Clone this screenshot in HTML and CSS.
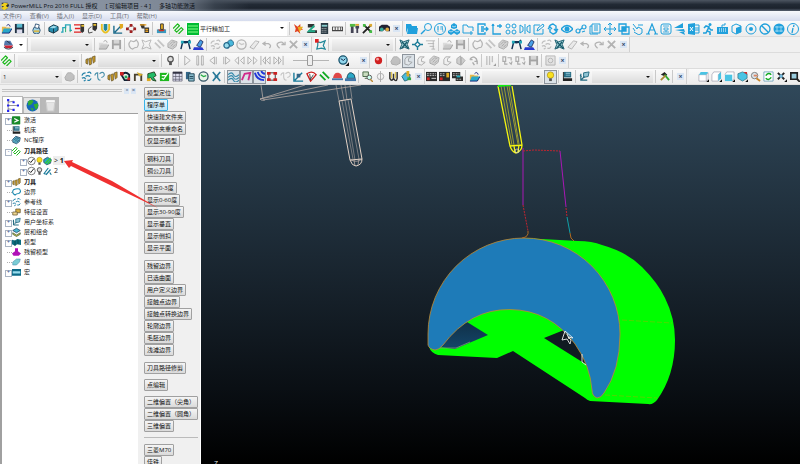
FILE: index.html
```html
<!DOCTYPE html>
<html lang="zh-CN">

<head>
    <meta charset="UTF-8">
    <meta name="viewport" content="width=device-width, initial-scale=1.0">
    <title>PowerMILL Pro 2016</title>
    <link rel="stylesheet" href="styles.css">
</head>

<body>
    <header class="titlebar">
        <span class="app-icon" data-icon="app"></span>
        <h1>PowerMILL Pro 2016 FULL 授权</h1>
        <span>[ 可编辑项目 - 4 ]</span>
        <span>多轴功能激活</span>
    </header>

    <nav class="menu">
        <a href="#">文件(F)</a>
        <a href="#">查看(V)</a>
        <a href="#">插入(I)</a>
        <a href="#">显示(D)</a>
        <a href="#">工具(T)</a>
        <a href="#">帮助(H)</a>
    </nav>

    <!-- Toolbars: the icon names are expanded by script.js -->
    <div class="row">
        <div class="bar">
            <div data-icons="open save | print | block rapid feed tool leads start points list | holder | strategy"></div>
            <div class="combo wide">
                <span data-icon="levels"></span>
                <select aria-label="策略"><option>平行精加工</option></select>
            </div>
            <div data-icons="| star verify calc ruler | drill cross | find x"></div>
        </div>
        <div class="bar blue" data-icons="folder zoom seal cubes newfolder export axis four mirror edit rotate eye chain copy move overlap hand letter frame fan excel run keyboard cube target ban globe info"></div>
    </div>

    <div class="row">
        <div class="bar">
            <button class="drop" aria-label="边界"><span data-icon="boundary"></span></button>
            <div data-icons="|"></div>
            <div class="combo"><select aria-label="边界列表"><option></option></select></div>
            <div data-icons="| ~open ~save | ~loop ~square ~hatch ~part curve pen | ~dots lasso ~clock ~eraser ~undo ~redo ~delete x"></div>
        </div>
        <div class="bar">
            <div data-icons="pattern |"></div>
            <div class="combo"><select aria-label="参考线列表"><option></option></select></div>
            <div data-icons="| mesh diamond ~lines | ~open ~save | ~loop ~hatch ~part curve pen | ~dots mesh ~eraser ~undo ~redo ~delete x"></div>
        </div>
    </div>

    <div class="row">
        <div class="bar">
            <div data-icons="strategy |"></div>
            <div class="combo"><select aria-label="刀具路径"><option></option></select></div>
            <div data-icons="| mills"></div>
            <div class="combo"><select aria-label="刀具"><option></option></select></div>
            <div data-icons="| lamp | ~play ~pause ~stepback ~stepfwd ~rewind ~forward ~first ~last"></div>
            <input type="range" aria-label="仿真速度" min="0" max="100" value="48">
            <div data-icons="speed _ x"></div>
        </div>
        <div class="bar" data-icons="record | ~shade !~half ~half ~part ~half ~split ~spin | ~bars | ~swap ~swap ~save | ~camera x"></div>
    </div>

    <div class="row">
        <div class="bar">
            <div class="combo"><select aria-label="当前刀具路径"><option>1</option></select></div>
            <div data-icons="~shade | dots chain2 mills link arch limit check table pages clock fan2 | !waves !turn !stripes grid ~chain2 axes fanred hatch domered domeblue | search ~phi um wheel x"></div>
        </div>
        <div class="bar flush">
            <div data-icons="nc nc2 nc3 | open"></div>
            <div class="combo"><select aria-label="NC程序"><option></option></select></div>
            <div data-icons="!bulb | layers | planes"></div>
            <div class="combo"><select aria-label="用户坐标系"><option></option></select></div>
            <div data-icons="| hammer | x"></div>
        </div>
        <div class="bar" data-icons="_ viewtop viewside viewfront viewiso lens refresh fit box | sphere"></div>
    </div>

    <main>
        <section class="explorer">
            <div class="grip">
                <i></i>
                <button aria-label="浮动">▫</button>
                <button aria-label="关闭">×</button>
            </div>
            <div class="tabs">
                <button class="active" aria-label="浏览器" data-icon="tree"></button>
                <button aria-label="网络" data-icon="earth"></button>
                <button class="trash" aria-label="回收站" data-icon="bin"></button>
            </div>
            <ul class="tree">
                <li class="more"><span data-icon="active"></span>激活</li>
                <li><span data-icon="layers"></span>机床</li>
                <li><span data-icon="part"></span>NC程序</li>
                <li class="more open"><span data-icon="strategy"></span><b>刀具路径</b>
                    <ul>
                        <li class="more"><span data-icon="tick"></span><span data-icon="bulb"></span><span data-icon="cut"></span><mark>&gt; <b>1</b></mark></li>
                        <li class="more"><span data-icon="tick"></span><span data-icon="lamp"></span><span data-icon="cut2"></span><em>2</em></li>
                    </ul>
                </li>
                <li class="more"><span data-icon="mills"></span><b>刀具</b></li>
                <li><span data-icon="loopblue"></span>边界</li>
                <li class="more"><span data-icon="dots"></span>参考线</li>
                <li><span data-icon="feature"></span>特征设置</li>
                <li class="more"><span data-icon="planes"></span>用户坐标系</li>
                <li class="more"><span data-icon="level"></span>层和组合</li>
                <li class="more"><span data-icon="model"></span>模型</li>
                <li><span data-icon="stock"></span>残留模型</li>
                <li><span data-icon="group"></span>组</li>
                <li class="more"><span data-icon="macro"></span>宏</li>
            </ul>
        </section>

        <aside class="macros">
            <div class="group long">
                <button>模型定位</button>
                <button class="current">程序单</button>
                <button>快速建文件夹</button>
                <button>文件夹重命名</button>
                <button>仅显示模型</button>
            </div>
            <div class="group">
                <button>钢料刀具</button>
                <button>铜公刀具</button>
            </div>
            <div class="group long">
                <button>显示0-3度</button>
                <button>显示0-60度</button>
                <button>显示30-90度</button>
                <button>显示垂直</button>
                <button>显示倒扣</button>
                <button>显示平面</button>
            </div>
            <div class="group long">
                <button>残留边界</button>
                <button>已选曲面</button>
                <button>用户定义边界</button>
                <button>接触点边界</button>
                <button>接触点转换边界</button>
                <button>轮廓边界</button>
                <button>毛胚边界</button>
                <button>浅滩边界</button>
            </div>
            <div class="group">
                <button>刀具路径修剪</button>
            </div>
            <div class="group">
                <button>点编辑</button>
            </div>
            <div class="group">
                <button>二维偏置（尖角）</button>
                <button>二维偏置（圆角）</button>
                <button>三维偏置</button>
            </div>
            <hr>
            <div class="group">
                <button>三菱M70</button>
                <button>佳铁</button>
            </div>
        </aside>

        <section class="view">
            <svg viewBox="201 85 599 379" preserveAspectRatio="xMinYMin slice" fill="none">
                <defs>
                    <linearGradient id="pocket" x1="0" y1="0" x2="0" y2="1">
                        <stop offset="0" stop-color="#103048"/>
                        <stop offset="1" stop-color="#14466a"/>
                    </linearGradient>
                </defs>

                <!-- holder and idle tool -->
                <g stroke="#b5aaa5" stroke-width=".8">
                    <path d="M261 85l2 14M260 99l45-14M260 99l68-14M263 100l98-15M260 99q1 2 5 1"/>
                    <path d="M336 85l3 16M341 85l3 15M345 85l2 15M350 85l2 14" opacity=".8"/>
                    <path d="M342 101l11 58M345 100l10 60M348 100l11 59" opacity=".7"/>
                    <path d="M351 160q6 3 11-1M354 160l1 6M359 159l-1 6"/>
                </g>
                <path d="M339 101l12-2 11 60q0 6-6 7-4 0-6-6zM350 160l12-1" stroke="#e3d2c6"/>

                <!-- cutting tool -->
                <path d="M501 86l11 59M504 86l10 59M507 86l11 58M509 86l10 58" stroke="#9b9b34"/>
                <path d="M498 86l12 60q2 6 6 7 6-2 6-8l-10-59M510 146l12-1M514 146l1 6M519 145l-1 7" stroke="#f5f510" stroke-width="1.3"/>
                <path d="M498 86l13-1" stroke="#12ee12" stroke-width="2"/>
                <circle cx="517" cy="151" r="2" stroke="#ddd" stroke-width=".7"/>

                <!-- part -->
                <path fill="#0f0" d="M523 238L578 241Q592 241 602 245Q627 252 642 267Q658 283 665 298Q675 318 675 340Q675 375 657 400Q653 405 648 404L590 401Q587 400 585 398L513 351L497 358L438 355Q431 353 429 347L460 300z"/>
                <path fill="url(#pocket)" d="M439 347Q451 331 467 322L488 335L455 349z"/>
                <path fill="#101a21" d="M544 338L564 330Q580 345 587 365z"/>
                <path d="M438 348h18l14-6" stroke="#8e9a78" stroke-width=".7"/>
                <path fill="#1e7bb8" stroke="#c08a30" stroke-width=".8" d="M428 345V334A96 96 0 0 1 524 238A96 96 0 0 1 620 334Q620 370 604 393Q601 398 597 398Q592 396 592 390Q590 365 575 344Q550 310 510 309.500Q470 309 443 345Q439 350 435 350Q429 349 428 345z"/>
                <path d="M622 320l50 3M605 395l52 3" stroke="#6ec800" stroke-width=".7" stroke-dasharray="5 2"/>
                <path d="M565 331l-3 9 5-1 3 5 1-4-3-3 5 1zM567 334l2 5M582 354v8l4 3" stroke="#eee" stroke-width=".9"/>

                <!-- lead moves -->
                <path d="M523 148v57M560 151l6 56" stroke="#a818b4"/>
                <path d="M523 151l11-1 26 1M523 205l5 26M566 208l1 9" stroke="#c02430" stroke-dasharray="2 1"/>
                <path d="M567 217l3 16" stroke="#10a0a8"/>
                <path d="M528 231q1 6-6 7M570 233q0 6 4 8" stroke="#b06a20"/>
                <text x="214" y="466" fill="#ddd">Z</text>
            </svg>
        </section>

        <svg class="pointer" viewBox="0 0 96 50" aria-hidden="true">
            <path d="M0 1L9 0L8 2L48 21L94 48L46 25L7 6L5 8z"/>
        </svg>
    </main>

    <script src="script.js"></script>
</body>

</html>
```
FILE: styles.css
```css
* {
    box-sizing: border-box;
}

body {
    margin: 0;
    height: 100vh;
    display: flex;
    flex-direction: column;
    overflow: hidden;
    background-color: #f0f0f0;
    color: #222;
    font-family: "Open Sans", "Noto Sans CJK SC", sans-serif;
    font-size: 6px;
    line-height: 10px;
}

button,
select,
input {
    margin: 0;
    padding: 0;
    font: inherit;
    color: inherit;
}

button {
    border: none;
    background: none;
}

svg {
    display: block;
}

.titlebar {
    flex: none;
    display: flex;
    align-items: center;
    gap: 8px;
    height: 11px;
    background: linear-gradient(to right, rgba(150, 160, 174, 1), rgba(125, 135, 149, 1) 170px, rgba(70, 80, 92, .6) 215px, transparent 250px),
        linear-gradient(#4c5561, #222a35 40%, #1c232d 75%, #566070);
    color: #0c1016;
}

.titlebar h1 {
    margin: 0 0 0 -7px;
    font-size: 6px;
    font-weight: normal;
}

.app-icon svg {
    width: 10px;
    height: 10px;
}

.menu {
    flex: none;
    display: flex;
    gap: 8px;
    height: 10px;
    padding-left: 3px;
    background: linear-gradient(#f6f8fc, #d6dcee);
}

.menu a {
    color: #6b6f78;
    text-decoration: none;
}

/* toolbars */
.row {
    flex: none;
    display: flex;
    gap: 2px;
    height: 16px;
    border-bottom: 1px solid #dcdcdc;
}

.bar {
    display: flex;
    align-items: center;
    height: 15px;
    background: linear-gradient(#fafafa, #ececec);
    border-right: 1px solid #d0d0d0;
}

.bar.flush {
    margin-left: -2px;
}

[data-icons] {
    display: flex;
    align-items: center;
}

.tool {
    display: flex;
    justify-content: center;
    align-items: center;
    width: 13px;
    height: 14px;
}

.tool svg,
.drop svg {
    width: 11px;
    height: 11px;
}

.tool:disabled svg {
    filter: grayscale(1);
    opacity: .4;
}

.tool.pressed {
    border: 1px solid #8d949c;
    background-color: #dbe2e8;
}

.sep {
    width: 1px;
    height: 13px;
    margin: 0 2px 0 1px;
    background-color: #c9c9c9;
}

.space {
    width: 8px;
}

.close {
    width: 7px;
    height: 7px;
    margin: 0 2px;
    background-color: #dae6f4;
    color: #34496b;
    font-size: 7px;
    font-weight: bold;
    line-height: 6px;
}

.blue {
    flex: 1;
    color: #20a0dc;
    border-right: none;
}

.blue .tool {
    flex: 1;
}

.blue .tool svg {
    width: 12px;
    height: 12px;
}

.combo {
    position: relative;
    width: 61px;
    margin: 0 1px;
}

.combo::after,
.drop::after {
    content: "";
    border: 2px solid transparent;
    border-top-color: #111;
    border-bottom: none;
}

.combo::after {
    position: absolute;
    right: 3px;
    top: 5px;
}

.combo select {
    display: block;
    appearance: none;
    width: 100%;
    height: 12px;
    padding-left: 2px;
    border: none;
    background: linear-gradient(#f4f4f4, #dcdcdc);
    line-height: 12px;
}

.combo.wide {
    width: 101px;
}

.combo.wide select {
    height: 14px;
    padding-left: 14px;
    background: #fff;
}

.combo.wide span {
    position: absolute;
    left: 1px;
    top: 1px;
}

.combo.wide svg {
    width: 12px;
    height: 12px;
}

.drop {
    display: flex;
    align-items: center;
    justify-content: space-around;
    width: 26px;
    height: 14px;
    background-color: #fff;
}

input[type="range"] {
    appearance: none;
    width: 36px;
    height: 12px;
    margin: 0 8px;
    background: linear-gradient(#b5b5b5, #b5b5b5) center / 100% 1px no-repeat;
}

input[type="range"]::-webkit-slider-thumb {
    appearance: none;
    width: 6px;
    height: 11px;
    border: 1px solid #999;
    border-radius: 1px;
    background-color: #eee;
}

/* work area */
main {
    position: relative;
    flex: 1;
    min-height: 0;
    display: flex;
}

.explorer {
    flex: none;
    display: flex;
    flex-direction: column;
    width: 138px;
}

.grip {
    display: flex;
    align-items: center;
    gap: 2px;
    height: 11px;
    padding: 0 2px;
}

.grip i {
    flex: 1;
    height: 3px;
    border: solid #c4c4c4;
    border-width: 1px 0;
}

.grip button {
    width: 5px;
    height: 6px;
    background-color: #dae6f4;
    color: #34496b;
    line-height: 5px;
}

.tabs {
    display: flex;
    align-items: flex-end;
    height: 17px;
    padding-left: 2px;
}

.tabs button {
    display: flex;
    justify-content: center;
    align-items: center;
    width: 18px;
    height: 16px;
    border: 1px solid #b8b8b8;
    border-bottom: none;
    background-color: #e4e4e4;
}

.tabs .active {
    width: 21px;
    height: 17px;
    background-color: #fff;
}

.tabs .trash {
    background-color: #b9b9b9;
}

.tabs svg {
    width: 13px;
    height: 13px;
}

.tree {
    flex: 1;
    margin: 0;
    padding: 1px 0 0 5px;
    border-left: 2px solid #a0a0a0;
    border-top: 1px solid #a0a0a0;
    background-color: #fff;
    list-style: none;
}

.tree ul {
    margin: 0;
    padding-left: 10px;
    list-style: none;
}

.tree li {
    position: relative;
    padding-left: 5px;
    white-space: nowrap;
}

.tree li.open {
    margin: 1px 0;
}

.tree li::before {
    content: "";
    position: absolute;
    left: 0;
    top: 5px;
    width: 5px;
    border-top: 1px dotted #b0b0b0;
}

.tree li.more::after {
    content: "+";
    position: absolute;
    left: -2px;
    top: 3px;
    width: 5px;
    height: 5px;
    border: 1px solid #a9b4c4;
    background-color: #fff;
    color: #2c4a86;
    font-size: 5px;
    line-height: 3px;
    text-align: center;
}

.tree li.open::after {
    content: "-";
}

.tree span {
    display: inline-block;
    width: 8px;
    height: 10px;
    margin-right: 4px;
    vertical-align: top;
}

.tree ul span {
    margin-right: 0;
}

.tree span svg {
    width: 9px;
    height: 10px;
}

.tree ul li {
    height: 10px;
}

.tree mark {
    margin-left: 2px;
    padding: 0 1px;
    background-color: #eee;
    color: #111;
    font-size: 7px;
}

.tree em {
    margin-left: 3px;
    font-size: 7px;
    font-style: normal;
}

.macros {
    flex: none;
    width: 63px;
    padding: 2px 2px 0 6px;
    border-right: 1px solid #fff;
    overflow: hidden;
}

.group {
    display: flex;
    flex-direction: column;
    align-items: flex-start;
    margin-bottom: 5px;
}

.group.long {
    padding-bottom: 1px;
}

.group button {
    height: 12px;
    padding: 0 2px;
    border: 1px solid #a0a0a0;
    border-radius: 1px;
    background: linear-gradient(#f5f5f5, #dadada);
    color: #111;
    white-space: nowrap;
}

.group .current {
    border-color: #3cb4e8;
    background: linear-gradient(#eaf7fd, #bfe6f8);
}

.macros hr {
    margin: 0 0 6px;
    border: none;
    border-top: 1px solid #bbb;
}

.view {
    flex: 1;
    min-width: 0;
    background: linear-gradient(#30485a, #1b2833 45%, #0a0f14 80%, #000);
}

.view svg {
    width: 100%;
    height: 100%;
}

.view text {
    font-size: 7px;
}

/* red pointer drawn across the tree and the macro column */
.pointer {
    position: absolute;
    left: 64px;
    top: 75px;
    width: 96px;
    fill: #f03030;
    pointer-events: none;
}
```
FILE: script.js
```js
const icons = {
    app: '<path fill="#2a2f38" d="M2 2h7l2 3-3 5H3z"/><path fill="#f2d21c" d="M1 5l4-3 5 1-3 3 3 2-5 3-4-3 4-1z"/>',
    open: '<path fill="#e8b84a" d="M1 4h4l1 1h4v6H1z"/><path fill="#2aa7c9" d="M3 6h9l-3 5H1z"/><path fill="none" stroke="#127" d="M6 3q3-3 4 1M1 11h8l3-5"/>',
    save: '<path fill="#234" d="M1 1h10v10H1z"/><path fill="#58b8cc" d="M3 1h6v4H3z"/><path fill="#dde" d="M3 7h6v4H3z"/>',
    print: '<circle cx="6" cy="8" r="4" fill="#9fd3e6" stroke="#357"/><path fill="#fff" stroke="#357" d="M4 5l1-4 4 1-1 4z"/><path fill="#d9b84a" d="M3 8h6v2H3z"/>',
    block: '<path fill="#2a8fb0" stroke="#134" d="M1 5l5-3 5 2v4l-5 3-5-2z"/><path fill="#9fdcec" d="M2 5l4-2 4 1-4 2z"/><path stroke="#134" d="M6 6v5"/>',
    rapid: '<path fill="none" stroke="#2aa7b9" stroke-width="1.500" d="M0 10h2V5h3V2h5v6h2"/><path fill="none" stroke="#2a6" d="M5 5v5M10 8v2"/>',
    feed: '<path stroke="#e02020" stroke-width="1.500" d="M0 2h7M1 6h6M0 10h8"/><path fill="#333" d="M7 1h4v8l-2 2-2-2z"/><path fill="#e8c030" d="M8 2h3v2H8z"/>',
    tool: '<path fill="#333" d="M6 0h5v6L9 9 6 7z"/><path fill="#e8c030" d="M7 1h3v2H7z"/><path fill="none" stroke="#444" d="M5 4Q0 6 2 11l4-1"/>',
    leads: '<path fill="none" stroke="#e8c020" stroke-width="2" d="M2 1v6q4 7 8 0V1"/><path fill="#289" d="M4 1h4v6L6 9 4 7z"/>',
    start: '<path fill="none" stroke="#1a6a8a" stroke-width="1.500" d="M1 3v8h9M2 10l8-8"/><path fill="#e0a820" d="M7 1h4v4L8 7z"/>',
    points: '<path fill="none" stroke="#888" d="M2 6l4-4 4 4-4 4z"/><path fill="#a02020" d="M4 1h3v3H4zM8 5h3v3H8zM4 8h3v3H4zM0 5h3v3H0z"/>',
    list: '<path fill="#333" d="M1 1h5v5H3zM6 5h5v6H6z"/><path stroke="#e8a020" stroke-width="1.500" d="M1 2h7M7 7h3M7 9h3"/>',
    holder: '<path fill="#3a9ac0" d="M1 7h10v4H1z"/><path fill="#d03020" d="M2 7h8L8 9H4z"/><path fill="#e8b020" stroke="#333" d="M5 1h3v6H5z"/>',
    strategy: '<path fill="none" stroke="#18b818" stroke-width="1.300" stroke-linejoin="round" d="M0 6l5-5 2 2-5 5 2 2 5-5 2 2-5 5"/>',
    levels: '<path fill="#0b3" d="M0 0h12v12H0z"/><path stroke="#8f8" d="M1 3h10M1 6h10M1 9h10"/>',
    star: '<path fill="#e04020" d="M1 1l4 3 3-3v4l3 2-4 1 1 4-3-3-3 1 1-4z"/><path fill="#e8b020" d="M5 4h6l-4 6z"/>',
    verify: '<path fill="#333" d="M2 1h7v4H2zM3 8h9v3H1z"/><path fill="none" stroke="#2a8" stroke-width="2" d="M9 3L3 9h7"/>',
    calc: '<path fill="#2a3a44" d="M2 0h8v12H2z"/><path fill="#8cc" d="M3 2h6v2H3z"/><path stroke="#ccc" stroke-dasharray="1 1" d="M3 6h6M3 8h6M3 10h6"/>',
    ruler: '<path fill="#444" d="M0 4h12v5H0z"/><path stroke="#eee" stroke-width="3" stroke-dasharray="2 1" d="M1 6h10"/>',
    drill: '<path fill="#445" d="M2 2h3v9H2zM7 3h4v3H7zM8 6h2v5H8z"/><path fill="#5b4" d="M1 1h6v3H1z"/><path fill="#da3" d="M7 1h4v2H7z"/>',
    cross: '<path stroke="#222" stroke-width="2" d="M1 11l9-9M2 2l8 8"/><path fill="#4b4" d="M1 1h3v3H1zM8 8h3v3H8z"/><path fill="#da3" d="M8 1h3v3H8z"/>',
    find: '<path fill="#223" d="M0 4l3-2h6l3 2v5H8L6 7 4 9H0z"/><circle cx="3" cy="7" r="2" fill="#3a9"/><circle cx="9" cy="7" r="2" fill="#da4"/>',
    folder: '<path fill="currentColor" d="M0 1h5l1 2h5v2H2L0 10z"/><path fill="currentColor" d="M2 5h10l-1 6H1z"/>',
    zoom: '<g fill="none" stroke="currentColor"><circle cx="8" cy="4" r="3.500"/><path stroke-width="1.500" d="M5 7l-4 4"/></g>',
    seal: '<g fill="none" stroke="currentColor"><circle cx="6" cy="6" r="5.500"/><path stroke-width=".7" d="M3 4h2M3 6h2M4 3v6M6 4h3M6 6h3M8 3l1 6"/></g>',
    cubes: '<path fill="currentColor" d="M6 0l3 2v3L6 6 3 5V2zM3 6l3 2v2l-3 2-3-2V8zM9 6l3 2v2l-3 2-3-2V8z"/><path stroke="#fff" d="M4 3l2 1 2-1M1 8l2 1 2-1M7 8l2 1 2-1" fill="none" stroke-width=".6"/>',
    newfolder: '<path fill="none" stroke="currentColor" d="M7 10H1V2h4l1 2h5v4M9 8v4M7 10h4"/>',
    export: '<path fill="none" stroke="currentColor" stroke-width="1.300" d="M8 3V1H1v10h7V9M4 6h7M9 4l2 2-2 2M4 4h3M4 8h3"/>',
    axis: '<path fill="none" stroke="currentColor" stroke-width="1.300" d="M2 1v10h8M6 3h5M9 1v4M2 1L1 3M2 1l1 2"/>',
    four: '<g fill="none" stroke="currentColor"><circle cx="3" cy="3" r="2"/><circle cx="9" cy="3" r="2"/><circle cx="3" cy="9" r="2"/><circle cx="9" cy="9" r="2"/></g>',
    mirror: '<path fill="none" stroke="currentColor" d="M1 2l3 2v4l-3 2zM11 2L8 4v4l3 2zM6 1v10"/>',
    edit: '<path fill="none" stroke="currentColor" d="M7 2H1v9h9V6M4 8l1-3 5-4 1 2-5 4z"/>',
    rotate: '<path fill="none" stroke="currentColor" stroke-width="1.400" d="M2 5q0-3 4-4l3 2v4M10 7q0 3-4 4L3 9V6M7 6l2 2 2-2M1 6l2-2 2 2"/>',
    eye: '<path fill="none" stroke="currentColor" stroke-width="1.500" d="M0 6q6-7 12 0-6 7-12 0z"/><circle cx="6" cy="6" r="2.500" fill="currentColor"/>',
    chain: '<g fill="none" stroke="currentColor" stroke-width="1.200"><circle cx="3" cy="8" r="2"/><circle cx="9" cy="4" r="2"/><path d="M5 7l2-2M7 9l3-1"/></g>',
    copy: '<path fill="none" stroke="currentColor" d="M3 1h8v9H3zM3 3H1v8h8M5 3h4M5 5h4M5 7h4"/>',
    move: '<path fill="none" stroke="currentColor" d="M6 0v12M0 6h12M4 2l2-2 2 2M4 10l2 2 2-2M2 4L0 6l2 2M10 4l2 2-2 2"/>',
    overlap: '<path fill="none" stroke="currentColor" stroke-width="1.300" d="M1 1h7v7H1zM4 4h7v7H4z"/><path fill="currentColor" d="M4 4h4v4H4z"/>',
    hand: '<path fill="none" stroke="currentColor" d="M1 1l4 5 1-2 4 2v4l-3 2-5-3M6 2h5M1 5l2 3"/>',
    letter: '<path fill="none" stroke="currentColor" stroke-width="1.200" d="M2 11L6 1l4 10M4 7h5M0 11h4M8 11h4"/>',
    frame: '<rect x="1" y="1" width="10" height="10" rx="2" fill="none" stroke="currentColor"/><path fill="none" stroke="currentColor" stroke-width=".8" d="M3 3h6M4 5h4v2H4zM3 9h6M6 7v2"/>',
    fan: '<path fill="currentColor" d="M0 5L9 0v5zM1 7l9-1 1 3zM5 9h5l1 3z"/>',
    excel: '<path fill="currentColor" d="M0 1l7-1v12l-7-1z"/><path fill="none" stroke="currentColor" d="M7 2h4v8H7M7 5h4M7 7h4"/><path stroke="#fff" d="M2 4l3 4M5 4L2 8"/>',
    run: '<circle cx="8" cy="1.500" r="1.500" fill="currentColor"/><path fill="none" stroke="currentColor" stroke-width="1.600" d="M2 5l2-2 3 1-2 4 3 1v3M5 8l-1 2H1M7 5l2 2h2"/>',
    keyboard: '<path fill="currentColor" d="M1 4h11v7H1z"/><path stroke="#fff" stroke-dasharray="1 1" d="M3 6h7M3 8h7"/><path fill="none" stroke="currentColor" d="M6 4V2h3V0"/>',
    cube: '<path fill="none" stroke="currentColor" d="M1 3l4-2 5 2v6l-5 2-4-2z"/><path fill="currentColor" d="M5 5l5-2v6l-5 2z"/>',
    target: '<circle cx="6" cy="6" r="5" fill="none" stroke="currentColor"/><circle cx="6" cy="6" r="2" fill="currentColor"/>',
    ban: '<g fill="none" stroke="currentColor" stroke-width="1.300"><circle cx="6" cy="6" r="5"/><path d="M2.500 2.500l7 7"/></g>',
    globe: '<circle cx="6" cy="6" r="5.500" fill="currentColor"/><path stroke="#bfe8f8" d="M2 4h8M2 8h8M4 3v6M8 3v6" stroke-width=".7"/>',
    info: '<circle cx="6" cy="6" r="5.500" fill="none" stroke="currentColor"/><path stroke="currentColor" stroke-width="1.300" d="M7 2L6.500 4M6 5l-1 5"/>',
    boundary: '<path fill="#57a" d="M2 2h6l3 5H1z"/><path fill="#c23" d="M1 7h10l-2 3H3z"/><path fill="none" stroke="#234" d="M1 9q5 4 10 0M4 2l4 3"/>',
    loop: '<path fill="none" stroke="#555" stroke-width="1.300" d="M3 10Q-1 6 3 2q4 2 6-1 4 4 1 8-3 0-5 2z"/>',
    loopblue: '<path fill="none" stroke="#1c8ab0" stroke-width="1.500" d="M4 10Q-1 7 2 3q4-2 8-1 3 4-1 6-3 0-5 2z"/>',
    square: '<path fill="none" stroke="#555" d="M1 1l4 2 6-2-2 5 2 5-5-2-5 2 2-5z"/>',
    hatch: '<path stroke="#1a2" stroke-width="2" d="M1 4l6 6M4 1l7 7"/>',
    part: '<path fill="#5cb2c8" stroke="#246" d="M1 5l4-4 6 2-1 5-4 3-5-2z"/><path fill="none" stroke="#246" d="M3 6l3-3 3 1M4 8l3-3M6 9l3-3"/>',
    curve: '<path fill="none" stroke="#135" stroke-width="1.600" d="M1 11l2-8h6l2 8M3 3q4 3 8-2"/><path fill="#2ab" d="M1 2h3v3H1zM9 2h3v3H9z"/>',
    pen: '<path fill="#2838d0" d="M1 9h9l2 3H0z"/><path fill="#48a0e8" stroke="#236" d="M4 7l4-6 3 2-3 6z"/>',
    dots: '<g fill="none" stroke="#2482a8" stroke-width="1.300"><path d="M1 5q1-3 4-3M7 2q3-2 4 1M5 6q2-2 5 0M1 8q3-2 4 1M7 10q3 1 4-2M3 11l2-1"/></g>',
    lasso: '<circle cx="4" cy="7" r="3" fill="#9de" stroke="#268" stroke-width="1.300"/><path fill="#48b8dc" stroke="#268" d="M5 3q4-4 6 0t-3 5z"/>',
    clock: '<circle cx="6" cy="6" r="5" fill="#e8f4e8" stroke="#356" stroke-width="1.400"/><path fill="none" stroke="#2a4" stroke-width="1.300" d="M3 4l3 2 3-1"/>',
    eraser: '<path fill="#ddd" stroke="#555" d="M1 9l6-7 4 1-6 8z"/>',
    undo: '<path fill="none" stroke="#555" stroke-width="1.400" d="M4 3L1 5l3 2M1 5h6q4 2 1 5"/>',
    redo: '<path fill="none" stroke="#555" stroke-width="1.400" d="M5 10Q0 6 4 4q4-2 6 2M7 6h4V3"/>',
    delete: '<path fill="none" stroke="#555" stroke-width="2" d="M2 2l8 8M10 2l-8 8"/>',
    pattern: '<path fill="none" stroke="#289" stroke-width="1.300" d="M3 3l3 1 5-2-2 5 2 4-4-1-5 1 1-4z"/><path fill="#d22" d="M0 0h4v4H0z"/>',
    mesh: '<path fill="#a9d6dc" stroke="#165a6a" d="M1 1l4 2 6-2-2 5 2 5-5-2-5 2 2-5z"/><path stroke="#165a6a" stroke-width="1.500" d="M3 3l7 7M9 3l-6 7"/>',
    diamond: '<path fill="none" stroke="#1c7c98" stroke-width="1.500" d="M6 0v4M6 8v4M0 6h4M8 6h4M6 3l3 3-3 3-3-3z"/>',
    lines: '<path fill="none" stroke="#555" d="M1 2h10M3 5h7M5 8h5M7 11h4M9 2v9"/>',
    mills: '<path fill="#c79a28" stroke="#5b4a20" stroke-width=".7" d="M1 5l2-1v6l-2-1zM4 4l3-1v7l-2 1zM8 2l3-1v6l-2 2z"/>',
    lamp: '<circle cx="6" cy="4.500" r="3" fill="#ddd" stroke="#555" stroke-width="1.300"/><path fill="#555" d="M4.500 7h3v4h-3z"/>',
    bulb: '<circle cx="6" cy="4.500" r="3.500" fill="#f8e020" stroke="#a88a10" stroke-width=".7"/><path fill="#555" d="M4.500 8h3v3h-3z"/>',
    play: '<path fill="none" stroke="#444" d="M3 1l6 5-6 5z"/>',
    pause: '<path fill="none" stroke="#444" d="M2 1h2v10H2zM7 1h2v10H7z"/>',
    stepback: '<path fill="none" stroke="#444" d="M7 2L2 6l5 4zM9 2v8"/>',
    stepfwd: '<path fill="none" stroke="#444" d="M5 2l5 4-5 4zM3 2v8"/>',
    rewind: '<path fill="none" stroke="#444" d="M5 2L1 6l4 4zM11 2L7 6l4 4z"/>',
    forward: '<path fill="none" stroke="#444" d="M1 2l4 4-4 4zM7 2l4 4-4 4z"/>',
    first: '<path fill="none" stroke="#444" d="M1 1v10M6 2L3 6l3 4zM11 2L7 6l4 4z"/>',
    last: '<path fill="none" stroke="#444" d="M11 1v10M1 2l4 4-4 4zM6 2l3 4-3 4z"/>',
    speed: '<circle cx="5.500" cy="5.500" r="4.500" fill="#8fd4ea" stroke="#14506a" stroke-width="1.400"/><path fill="none" stroke="#124" d="M3 4l3 2 2-2"/><path fill="#111" d="M12 8v4H8z"/>',
    record: '<circle cx="6" cy="6" r="4" fill="#d02020"/><circle cx="5" cy="4.500" r="1.500" fill="#f8a0a0"/>',
    shade: '<path fill="#777" stroke="#444" d="M1 7l3-5h4l3 3v4l-4 2-5-1z"/>',
    half: '<path fill="#eee" stroke="#444" d="M9 2L4 2 2 5v5l4 1 4-3-4-1V4z"/>',
    split: '<path fill="#999" stroke="#444" d="M2 4l4-3v10l-4-2zM7 2l4 4-4 5z"/>',
    spin: '<path fill="none" stroke="#444" stroke-width="1.500" d="M2 5q3-5 7-1l1 3M2 5h3M7 7h3v3M5 8l2 3"/>',
    bars: '<path fill="none" stroke="#777" stroke-width="1.500" d="M2 1v10M5 1v10M8 1v7"/><path fill="#222" d="M12 9v3H9z"/>',
    swap: '<path fill="none" stroke="#444" stroke-width="1.300" d="M1 2h3v5H1zM6 3h4v3M8 8l2 2 1-3M3 7v3h3"/>',
    camera: '<path fill="#ccc" stroke="#555" d="M1 1h10v10H1z"/><circle cx="6" cy="6" r="2.500" fill="none" stroke="#555"/>',
    chain2: '<g fill="none" stroke="#4a90aa" stroke-width="1.200"><path d="M1 5q0-3 3-3v4q0 4 3 4M6 3q4-3 5 0T8 7"/></g>',
    link: '<path fill="none" stroke="#123" stroke-width="2" d="M2 4q4-4 8 0v6H5L2 5z"/><path fill="#c22" d="M0 1h4v4H0zM8 7h3v3H8z"/><path fill="#2a5" d="M5 5h3v3H5z"/>',
    arch: '<path fill="none" stroke="#484030" stroke-width="2" d="M2 11V4h7v7"/><path fill="#d8b030" d="M4 1l7 3-4 2z"/>',
    limit: '<path fill="#2b6" stroke="#242" d="M2 3l7-2 2 4-3 2 3 4-4-1-2-3-3 2z"/><path fill="#da2" d="M1 8h4v3H1z"/>',
    check: '<path fill="#1eb81e" d="M1 2h10v9H1z"/><path fill="none" stroke="#fff" stroke-width="1.300" d="M3 5h5M3 8l2 1 5-7"/>',
    table: '<path fill="#dde" stroke="#556" stroke-width=".7" d="M1 1h10v10H1zM1 6h10M1 9h10M4 1v10M8 1v10"/><path fill="#334" d="M1 1h10v2H1z"/>',
    pages: '<path fill="#368" d="M1 1h5v8H1z"/><path fill="#8bc" stroke="#245" d="M4 3h6v8H4z"/><path stroke="#245" d="M5 6h4M5 8h4"/>',
    fan2: '<path stroke="#2a7a9a" stroke-width="1.800" d="M2 1l8 10M10 1L2 11M4 6h4"/>',
    waves: '<path fill="none" stroke="#38a" stroke-width="1.200" d="M0 4q4-4 6 0t6 0M0 7q4-4 6 0t6 0M0 10q4-4 6 0t6 0"/>',
    turn: '<path fill="none" stroke="#d12a8a" stroke-width="2" d="M1 10l3-7 6-1-2 8"/>',
    stripes: '<path fill="none" stroke="#2038d8" stroke-width="2" d="M1 2q2 8 10 8M4 1q2 6 8 6M8 0q1 3 4 3"/>',
    grid: '<path fill="none" stroke="#333" d="M2 2h7v8H2z"/><path fill="#c22" d="M0 1h4v3H0zM7 1h4v3H7zM0 8h4v3H0zM7 8h4v3H7z"/>',
    axes: '<path fill="none" stroke="#167a9a" stroke-width="1.500" d="M1 2v9h10M2 10l8-8"/><path fill="#368" d="M4 3h4v4H4z"/>',
    fanred: '<path fill="#fff" stroke="#c22" stroke-width="1.500" d="M1 3q6-4 10 1L5 11z"/><path stroke="#344" d="M4 3l1 7M8 4l-3 5"/>',
    domered: '<path fill="#e04848" d="M1 8q1-7 6-6 4 1 4 6z"/><path fill="#47a" d="M0 8h12v2H0z"/>',
    domeblue: '<path fill="#2aa8c8" stroke="#245" d="M2 8q1-7 5-6 4 1 4 6z"/><path fill="#47a" d="M0 8h12v3H0z"/>',
    search: '<path fill="#c9ddc0" stroke="#464" d="M1 1h6v5H1zM3 8h3"/><circle cx="8" cy="7" r="2.500" fill="#cfe" stroke="#555"/><path stroke="#b83" stroke-width="1.500" d="M9 9l3 3"/>',
    phi: '<circle cx="6" cy="6" r="3.500" fill="none" stroke="#444"/><path stroke="#444" d="M6 0v12"/>',
    um: '<path fill="none" stroke="#333" stroke-width="1.600" d="M2 1v7q2 4 4 0V3M6 8q3 5 4 0V1"/><path stroke="#db2" d="M4 1v7M8 1v7"/>',
    wheel: '<path fill="#48b8dc" stroke="#267" d="M1 6l4-4 5 2-1 5-5 2z"/><path fill="#da2" d="M6 0h3v6H6z"/><path fill="#3a4" d="M7 7h4v3H7z"/>',
    nc: '<path fill="#2a2a2a" d="M0 1h12v10H0z"/><path stroke="#ccc" stroke-dasharray="2 1" d="M1 3h10M1 5h10"/><path fill="#c22" d="M1 7h3v3H1z"/><path stroke="#ddd" d="M6 8h5"/>',
    nc2: '<path fill="#2a2a2a" d="M0 1h12v10H0z"/><path stroke="#bbb" stroke-dasharray="2 1" d="M1 3h6M1 5h6"/><path fill="#c22" d="M1 7h3v3H1z"/><path fill="#da2" d="M8 2h3v5H8z"/>',
    nc3: '<path fill="#2a2a2a" d="M0 1h9v7H0zM4 6h8v5H4z"/><path stroke="#bbb" stroke-dasharray="2 1" d="M1 3h7M1 5h7M5 9h6"/><path fill="#2ab" d="M5 5h4v2H5z"/>',
    layers: '<path fill="#246a80" d="M2 1h8v6H2z"/><path fill="#9cd" d="M4 2h5v1H4zM4 4h5v1H4z"/><path fill="#222" d="M1 8h10v3H1zM1 1h1v9H1z"/>',
    planes: '<path fill="#8fc4d4" stroke="#246a80" d="M5 2l6-1-1 5-5 1z"/><path fill="none" stroke="#246a80" stroke-width="1.300" d="M2 3v7h7M2 10l4-4M1 5l2 1"/>',
    hammer: '<path fill="#222" d="M2 4l4-3 3 3-2 2z"/><path stroke="#3a3" stroke-width="2" d="M6 4l5 6"/><path stroke="#a83" stroke-width="2" d="M2 10l5-5"/>',
    viewtop: '<path fill="#fff" stroke="#99a" stroke-width=".7" d="M1 4h8v7H1zM9 4l2-2v7l-2 2"/><path fill="#4bc4e4" d="M1 4l2-3h8L9 4z"/><path fill="#111" d="M12 9v3H9z"/>',
    viewside: '<path fill="#fff" stroke="#99a" stroke-width=".7" d="M1 4l2-3h8L8 4v7H1z"/><path fill="#4bc4e4" d="M8 4l3-3v7l-3 3z"/><path fill="#111" d="M12 9v3H9z"/>',
    viewfront: '<path fill="#fff" stroke="#99a" stroke-width=".7" d="M1 4l2-3h8v7l-2 3"/><path fill="#4bc4e4" d="M1 4h8v7H1z"/><path fill="#111" d="M12 9v3H9z"/>',
    viewiso: '<path fill="#4bc4e4" stroke="#267" stroke-width=".7" d="M1 3l5-2 5 2v5l-5 3-5-3z"/><path fill="#c33" d="M7 1h4v3z"/><path fill="#111" d="M12 9v3H9z"/>',
    lens: '<circle cx="5" cy="5" r="3.500" fill="#dce8ee" stroke="#777"/><path stroke="#c8862a" stroke-width="2" d="M7 8l4 3"/><path fill="#d86" d="M4 4h4v2H4z"/>',
    refresh: '<path fill="#fff" stroke="#48a" stroke-width=".7" d="M1 1h10v10H1z"/><path fill="none" stroke="#1a2" stroke-width="1.600" d="M3 5q3-4 6-1M9 7q-3 4-6 1"/>',
    fit: '<path fill="none" stroke="#222" stroke-width="2" d="M2 2l7 7M9 2L2 9"/><circle cx="5.500" cy="5.500" r="2" fill="#7bd"/><path fill="#111" d="M12 9v3H9z"/>',
    box: '<path fill="#9cd" stroke="#222" stroke-width="1.800" d="M2 2h7v7H2z"/><path stroke="#222" stroke-width="2" d="M9 9l3 3"/>',
    sphere: '<circle cx="6" cy="6" r="5" fill="#2a9ab8" stroke="#134"/>',
    tree: '<path fill="none" stroke="#777" stroke-width=".7" d="M2 1v10M2 3l5-1M2 6h8M2 9l5 1"/><path fill="#22e" d="M1 0h2v2H1zM1 5h2v2H1zM1 10h2v2H1zM6 2h2v2H6zM6 9h2v2H6zM10 5h2v2h-2z"/>',
    earth: '<circle cx="6" cy="6" r="5.500" fill="#1668b8"/><path fill="#30b030" d="M2 2q3-2 5 0L5 5 2 6zM7 5l4-1q1 4-2 6zM4 8l3 1-1 2z"/>',
    bin: '<path fill="#e4e4e4" stroke="#ccc" d="M2 3h8l-1 8H3z"/><path fill="#f8f8f8" d="M2 1h8v2H2z"/>',
    active: '<rect x="0" y="1" width="11" height="11" rx="1" fill="#1a8a2a"/><path fill="none" stroke="#fff" stroke-width="1.600" d="M3 4l5 2.500L3 9"/>',
    tick: '<circle cx="6" cy="6" r="5" fill="#fff" stroke="#555"/><path fill="none" stroke="#222" stroke-width="1.300" d="M3 6l2 2 4-5"/>',
    cut: '<path fill="#2aa8b8" stroke="#246" d="M1 4l5-3 5 3-1 5-5 2-4-3z"/><path stroke="#3c3" stroke-width="1.500" d="M3 9l7-7M6 10l5-5"/>',
    cut2: '<path fill="none" stroke="#1a7a9a" stroke-width="1.600" d="M1 10l6-8M4 11l6-7M2 10h3M9 8l2 3"/>',
    feature: '<path fill="#d8b040" stroke="#653" d="M5 2h6v5H5z"/><path fill="#f0d890" stroke="#653" d="M1 6h6v4H1z"/>',
    level: '<path fill="#48b8d0" stroke="#246" d="M1 4l5-3 5 3-5 3z"/><path fill="#d8c040" stroke="#464" d="M1 7l5 3 5-3v2l-5 3-5-3z"/>',
    model: '<path fill="#0c6c80" d="M0 3l4 1 3-2 5 1v7l-5-1-3 2-4-2z"/><path stroke="#044" d="M4 4v7M8 3v6"/>',
    stock: '<path fill="#b010b8" d="M4 1h4v4l4 3-3 3H2L0 8l4-3z"/>',
    group: '<path fill="#7accd4" stroke="#48a" stroke-width=".7" d="M1 6l5-4h5l-1 4-4 4H1z"/>',
    macro: '<path fill="#0c6a88" d="M0 2h12v9H0z"/><path fill="#9de" d="M1 5h10v3H1z"/>'
};

function drawIcon(name) {
    return `<svg viewBox="0 0 12 12">${icons[name]}</svg>`;
}

// "|" is a separator, "_" a space, "x" closes the bar, "~" is disabled, "!" is pressed
function drawTool(item) {
    if (item == "|") return `<i class="sep"></i>`;
    if (item == "_") return `<i class="space"></i>`;
    if (item == "x") return `<button class="close" aria-label="关闭">×</button>`;

    const name = item.replace(/[~!]/g, "");
    const pressed = item.includes("!") ? " pressed" : "";
    const disabled = item.includes("~") ? "disabled" : "";
    return `<button class="tool${pressed}" aria-label="${name}" ${disabled}>${drawIcon(name)}</button>`;
}

document.querySelectorAll("[data-icons]").forEach(bar => {
    bar.innerHTML = bar.dataset.icons.split(" ").map(drawTool).join("");
});

document.querySelectorAll("[data-icon]").forEach(el => {
    el.innerHTML = drawIcon(el.dataset.icon);
});
```
